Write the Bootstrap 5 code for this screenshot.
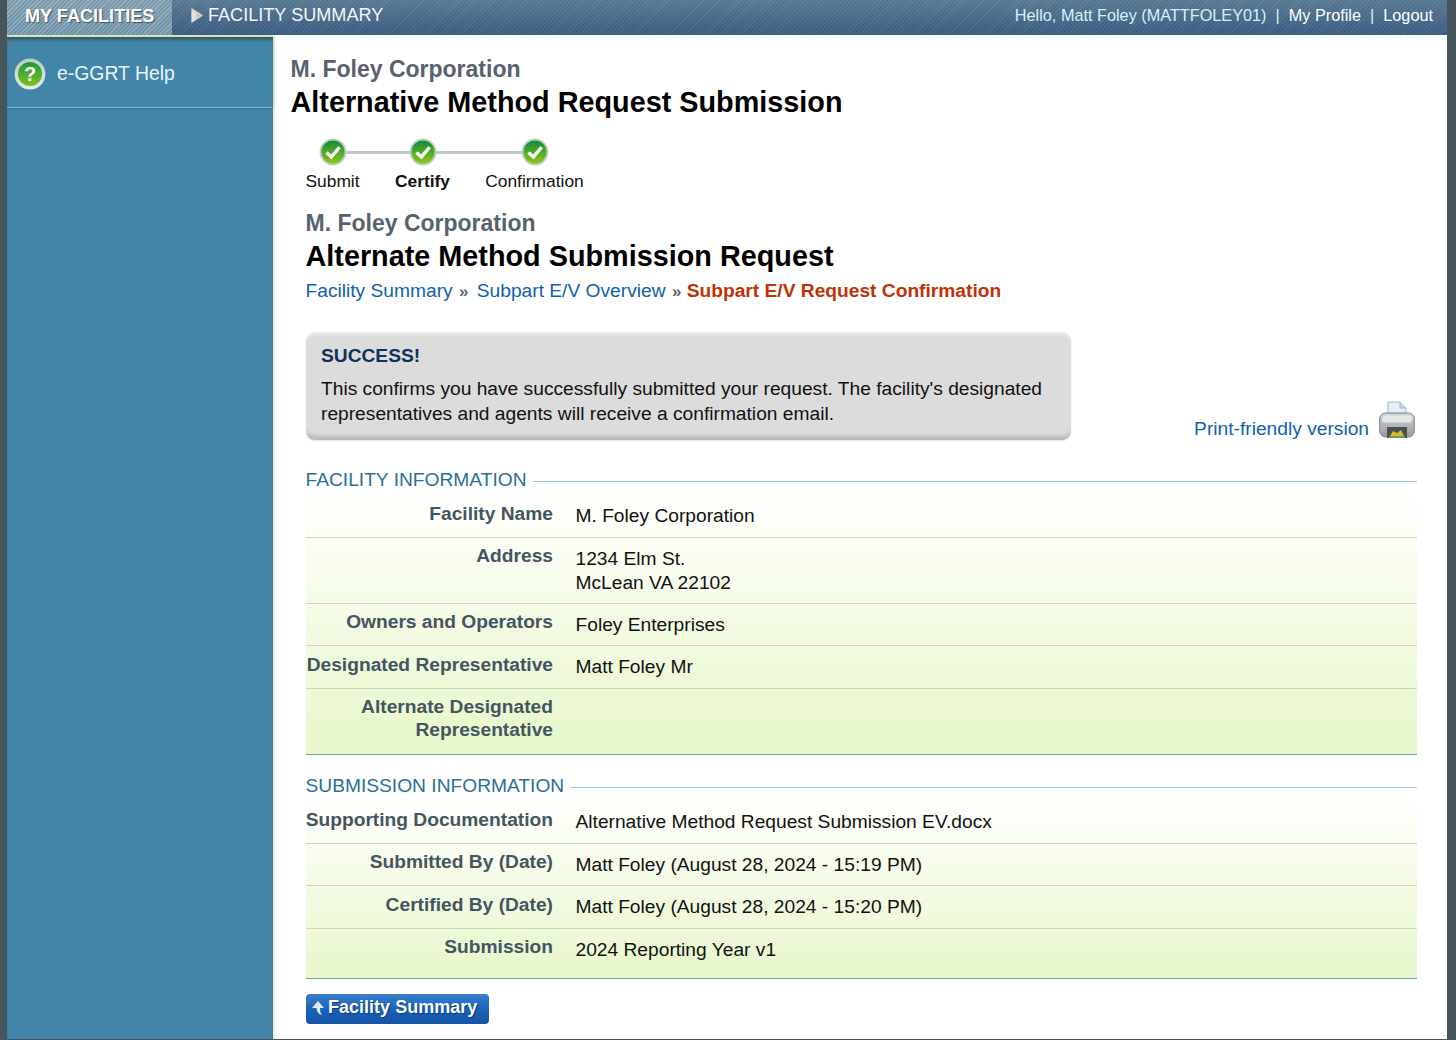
<!DOCTYPE html>
<html lang="en"><head><meta charset="utf-8"><title>Facility Summary</title>
<link href="https://cdn.jsdelivr.net/npm/bootstrap@5.3.0/dist/css/bootstrap.min.css" rel="stylesheet">
<style>
html,body{height:100%;}
body{background:#46555c;font-family:"Liberation Sans",Arial,sans-serif;font-size:19.2px;line-height:25px;color:#111;overflow:hidden;}
.shell{margin:0 9px 0 7px;height:1039px;background:#fff;display:flex;flex-direction:column;overflow:hidden;}
.topbar{height:35px;flex:none;background:repeating-linear-gradient(135deg,rgba(255,255,255,.05) 0 1px,rgba(0,0,0,.04) 1px 3px),linear-gradient(#5c7c97,#3c5f85);color:#fff;}
.tab-main{width:165px;height:35px;background:repeating-linear-gradient(135deg,rgba(255,255,255,.22) 0 1px,rgba(255,255,255,0) 1px 3px),linear-gradient(#7e9cae,#6f93a8);font-weight:700;font-size:18.1px;padding-left:18px;line-height:32px;text-shadow:1px 1px 1px #456;}
.crumb-top{font-size:18.1px;line-height:31px;padding-left:18px;color:#f2f6f8;gap:4px;}
.userline{font-size:16.25px;line-height:31px;padding-right:14px;color:#d7f1f5;white-space:pre;}
.userline a{color:#fff;text-decoration:none;}
.bodywrap{flex:1;min-height:0;}
.sidepane{width:268px;flex:none;background:#4285a9;border-right:2px solid #e6f3cf;border-top:2px solid #d4e8bc;box-shadow:inset 0 4px 3px -1px #3c5a66;}
.helprow{height:71px;border-bottom:1px solid #7fb2cc;padding:4px 0 0 7px;gap:11px;color:#e8f5f8;font-size:19.4px;box-shadow:0 1px 2px rgba(40,80,110,.4);}
.helprow span{margin-top:-2px;}
.mainpane{padding:19px 30px 0 15.5px;min-width:0;flex:1;}
.org{color:#56636f;font-weight:700;font-size:23px;line-height:30px;}
.pagetitle{color:#000;font-weight:700;font-size:28.8px;line-height:36px;margin:0;}
.inner{padding-left:15px;}
.stepper{width:290px;height:60px;margin-top:16px;}
.stepline{position:absolute;left:27px;top:15px;width:203px;height:3px;background:#c6c6c6;}
.stepdot{position:absolute;top:2px;}
.steplabel{position:absolute;top:33px;font-size:17.4px;color:#111;transform:translateX(-50%);white-space:nowrap;}
.org2{margin-top:12px;}
.trail{line-height:25px;margin-top:4px;}
.trail a{color:#1160ac;text-decoration:none;}
.trail .sep{color:#56636f;font-weight:700;font-size:17px;margin:0 3px 0 1px;}
.trail .sep-b{margin:0 0 0 1px;}
.trail .here{color:#bf3206;font-weight:700;}
.notice{width:765px;height:108px;margin-left:.5px;background:#dcdcdc;border-radius:9px;padding:11px 15px 0;box-shadow:inset 0 3px 3px -1px #eef2f2,inset 0 -7px 4px -3px #b7b7b7,0 1px 2px rgba(0,0,0,.12);line-height:25px;color:#111;}
.notice-h{color:#12305a;font-weight:700;line-height:25px;margin-bottom:8px;}
.topline{margin-top:28px;}
.printlink{color:#1160ac;text-decoration:none;gap:10px;padding-right:2px;}
.printlink span{margin-bottom:-1px;}
.sect{color:#296f97;line-height:24px;gap:6px;}
.sect::after{content:"";flex:1;height:1px;background:#9cc6da;margin-top:3px;}
.infotable{background:linear-gradient(#fffffd,#e7f7ca);border-bottom:1px solid #6d9fb0;margin:3px 0 0 .5px;}
.inforow{border-bottom:1px solid #c7d9b4;display:flex;min-height:42.5px;box-sizing:border-box;padding-top:8.5px;}
.inforow:last-child{border-bottom:0;}
.rowtall{min-height:66px;}
.rowalt{min-height:65.5px;}
.rowlast{min-height:49px;}
.lbl{width:248px;margin-left:-1px;margin-top:-2px;flex:none;text-align:right;font-weight:700;color:#445562;line-height:23px;white-space:nowrap;}
.val{padding-left:22.5px;margin-top:.5px;line-height:24.5px;color:#111;}
.backbtn{display:inline-flex;align-items:center;gap:3px;height:30px;width:183px;margin-left:.5px;padding:0 0 2px 5px;color:#fff;font-weight:700;font-size:18.05px;border-radius:4px;background:linear-gradient(#3a80cf,#1a61b8 55%,#1554a4);text-shadow:1px 1px 1px #0c3c78;text-decoration:none;}
</style></head>
<body>
<div class="shell">
 <div class="topbar d-flex align-items-start">
  <div class="tab-main">MY FACILITIES</div>
  <div class="crumb-top d-flex align-items-center">
   <svg width="14" height="18" viewBox="0 0 14 18"><defs><linearGradient id="ag" x1="0" y1="0" x2="1" y2="0"><stop offset="0" stop-color="#f2f0e8"/><stop offset="1" stop-color="#a9a9a4"/></linearGradient></defs><path d="M2 2 L12 8.5 L2 15 Z" fill="url(#ag)" stroke="#d8d8d2" stroke-width="1.4" stroke-linejoin="round"/></svg>
   <span>FACILITY SUMMARY</span>
  </div>
  <div class="userline ms-auto">Hello, Matt Foley (MATTFOLEY01)  |  <a href="#">My Profile</a>  |  <a href="#">Logout</a></div>
 </div>
 <div class="bodywrap d-flex">
  <aside class="sidepane">
   <div class="helprow d-flex align-items-center">
    <svg width="32" height="32" viewBox="0 0 32 32"><defs><linearGradient id="hg" x1="0" y1="0" x2="0" y2="1"><stop offset="0" stop-color="#1d9a35"/><stop offset="1" stop-color="#7cc022"/></linearGradient><linearGradient id="hr" x1="0" y1="0" x2="0" y2="1"><stop offset="0" stop-color="#b9ccc6"/><stop offset="1" stop-color="#e6ece6"/></linearGradient></defs><circle cx="16" cy="16" r="15.4" fill="url(#hr)"/><circle cx="16" cy="16" r="12" fill="url(#hg)"/><text x="16" y="23" text-anchor="middle" font-family="Liberation Sans" font-weight="700" font-size="20" fill="#fff">?</text></svg>
    <span>e-GGRT Help</span>
   </div>
  </aside>
  <main class="mainpane">
   <div class="org">M. Foley Corporation</div>
   <h1 class="pagetitle">Alternative Method Request Submission</h1>
   <div class="inner">
    <div class="stepper position-relative">
     <div class="stepline"></div>
     <svg class="stepdot" style="left:13px" width="28" height="28" viewBox="0 0 28 28"><use href="#okdot"/></svg>
     <svg class="stepdot" style="left:103px" width="28" height="28" viewBox="0 0 28 28"><use href="#okdot"/></svg>
     <svg class="stepdot" style="left:215px" width="28" height="28" viewBox="0 0 28 28"><use href="#okdot"/></svg>
     <span class="steplabel" style="left:27px">Submit</span>
     <span class="steplabel fw-bold" style="left:117px">Certify</span>
     <span class="steplabel" style="left:229px">Confirmation</span>
    </div>
    <svg width="0" height="0" class="position-absolute"><defs><linearGradient id="og" x1="0" y1="0" x2="0" y2="1"><stop offset="0" stop-color="#128a3c"/><stop offset="1" stop-color="#8cc61e"/></linearGradient><g id="okdot"><circle cx="14" cy="14" r="13.4" fill="#bccfc4"/><circle cx="14" cy="14" r="11.5" fill="url(#og)"/><path d="M7.5 14.5 L12.4 19 L20.6 9.2" fill="none" stroke="#f4f8ee" stroke-width="3.4"/></g></defs></svg>
    <div class="org org2">M. Foley Corporation</div>
    <h2 class="pagetitle">Alternate Method Submission Request</h2>
    <div class="trail"><a href="#">Facility Summary</a> <span class="sep">»</span> <a href="#">Subpart E/V Overview</a> <span class="sep sep-b">»</span> <span class="here">Subpart E/V Request Confirmation</span></div>
    <div class="topline d-flex justify-content-between align-items-end">
     <div class="notice">
      <div class="notice-h">SUCCESS!</div>
      <div>This confirms you have successfully submitted your request. The facility's designated representatives and agents will receive a confirmation email.</div>
     </div>
     <a class="printlink d-flex align-items-end" href="#"><span>Print-friendly version</span>
      <svg width="36" height="40" viewBox="0 0 36 40"><defs><linearGradient id="pb" x1="0" y1="0" x2="0" y2="1"><stop offset="0" stop-color="#d2d5d6"/><stop offset="1" stop-color="#979ca0"/></linearGradient></defs><path d="M9 2 H21 L27 8 V17 H9 Z" fill="#e8eff6" stroke="#9fb4c6"/><path d="M21 2 V8 H27" fill="#c9d8e6" stroke="#9fb4c6"/><rect x=".7" y="13" width="34.6" height="24" rx="6" fill="url(#pb)" stroke="#7c8286"/><rect x="3" y="15.5" width="30" height="7" rx="3" fill="#e4e7e8"/><rect x="8" y="27" width="20" height="11" fill="#4a5055"/><path d="M10 38 L14 31 L18 33 L22 30 L26 38 Z" fill="#d6b82e"/><rect x="10" y="36" width="16" height="2" fill="#6aa04a"/></svg>
     </a>
    </div>
    <div class="sect d-flex align-items-center" style="margin-top:28px">FACILITY INFORMATION</div>
    <div class="infotable">
     <div class="inforow"><div class="lbl">Facility Name</div><div class="val">M. Foley Corporation</div></div>
     <div class="inforow rowtall"><div class="lbl">Address</div><div class="val">1234 Elm St.<br>McLean VA 22102</div></div>
     <div class="inforow"><div class="lbl">Owners and Operators</div><div class="val">Foley Enterprises</div></div>
     <div class="inforow"><div class="lbl">Designated Representative</div><div class="val">Matt Foley Mr</div></div>
     <div class="inforow rowalt"><div class="lbl">Alternate Designated<br>Representative</div><div class="val"></div></div>
    </div>
    <div class="sect d-flex align-items-center" style="margin-top:19px">SUBMISSION INFORMATION</div>
    <div class="infotable">
     <div class="inforow"><div class="lbl">Supporting Documentation</div><div class="val">Alternative Method Request Submission EV.docx</div></div>
     <div class="inforow"><div class="lbl">Submitted By (Date)</div><div class="val">Matt Foley (August 28, 2024 - 15:19 PM)</div></div>
     <div class="inforow"><div class="lbl">Certified By (Date)</div><div class="val">Matt Foley (August 28, 2024 - 15:20 PM)</div></div>
     <div class="inforow rowlast"><div class="lbl">Submission</div><div class="val">2024 Reporting Year v1</div></div>
    </div>
    <a class="backbtn" href="#" style="margin-top:15px"><svg width="14" height="18" viewBox="0 0 14 18"><path d="M7 2 L13 9 H9 Q8.5 13 11 16 Q6 15 5.5 9 H1 Z" fill="#dfe9f5"/></svg><span>Facility Summary</span></a>
   </div>
  </main>
 </div>
</div>
<script src="https://cdn.jsdelivr.net/npm/bootstrap@5.3.0/dist/js/bootstrap.bundle.min.js"></script>
</body></html>
